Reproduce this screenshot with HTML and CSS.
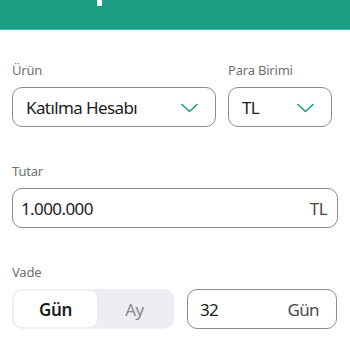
FILE: index.html
```html
<!DOCTYPE html>
<html lang="tr">

<head>
    <meta charset="UTF-8">
    <meta name="viewport" content="width=device-width, initial-scale=1.0">
    <title>Hesaplama</title>
    <link rel="stylesheet" href="styles.css">
</head>

<body>
    <div class="topbar">
        <span class="topbar-mark"></span>
    </div>

    <div class="form">
        <div class="row row-product">
            <div class="field">
                <div class="label">Ürün</div>
                <div class="select">
                    <span>Katılma Hesabı</span>
                    <svg class="chevron" width="17" height="10" viewBox="0 0 17 10">
                        <path d="M1 1.5 L8.5 8.5 L16 1.5" fill="none" stroke="#1d9c83" stroke-width="1.6" stroke-linecap="round" stroke-linejoin="round" />
                    </svg>
                </div>
            </div>
            <div class="field">
                <div class="label">Para Birimi</div>
                <div class="select">
                    <span>TL</span>
                    <svg class="chevron" width="17" height="10" viewBox="0 0 17 10">
                        <path d="M1 1.5 L8.5 8.5 L16 1.5" fill="none" stroke="#1d9c83" stroke-width="1.6" stroke-linecap="round" stroke-linejoin="round" />
                    </svg>
                </div>
            </div>
        </div>

        <div class="field group">
            <div class="label">Tutar</div>
            <div class="input amount">
                <span>1.000.000</span>
                <span class="unit">TL</span>
            </div>
        </div>

        <div class="field group">
            <div class="label">Vade</div>
            <div class="row row-term">
                <div class="segment">
                    <div class="seg-item active">Gün</div>
                    <div class="seg-item">Ay</div>
                </div>
                <div class="input term">
                    <span>32</span>
                    <span class="unit">Gün</span>
                </div>
            </div>
        </div>
    </div>
</body>

</html>
```

FILE: styles.css
```css
* {
    margin: 0;
    padding: 0;
    box-sizing: border-box;
}

body {
    font-family: 'Noto Sans', 'Open Sans', sans-serif;
    background: white;
    color: #1c1c1c;
}

.topbar {
    height: 30px;
    background: #1a9e84;
    border-bottom: 1px solid #4db8a2;
    padding-left: 97px;
}

.topbar-mark {
    display: block;
    width: 5px;
    height: 6px;
    background: white;
}

.form {
    padding: 31px 12px 0 12px;
}

.label {
    font-size: 13px;
    line-height: 18px;
    color: #6f6f6f;
    margin-bottom: 8px;
    letter-spacing: -0.2px;
}

.row {
    display: grid;
}

.row-product {
    grid-template-columns: 204px 104px;
    gap: 12px;
}

.row-term {
    grid-template-columns: 162px 150px;
    gap: 13px;
}

.group {
    margin-top: 35px;
}

.select,
.input {
    height: 40px;
    border: 1px solid #8c8c8c;
    border-radius: 10px;
    display: flex;
    align-items: center;
    justify-content: space-between;
    font-size: 17px;
    letter-spacing: -0.6px;
}

.select {
    padding: 0 17px 0 13px;
}

.amount {
    width: 326px;
    padding: 0 10px 0 8px;
}

.term {
    padding: 0 17px 0 12px;
}

.unit {
    color: #4a4a4a;
}

.chevron {
    margin-top: 2px;
}

.segment {
    height: 40px;
    background: #eeeef2;
    border-radius: 10px;
    padding: 2px;
    display: flex;
}

.seg-item {
    flex: 1;
    display: flex;
    align-items: center;
    justify-content: center;
    font-size: 17px;
    color: #8a8a8a;
    border-radius: 8px;
    letter-spacing: -0.4px;
}

.seg-item.active {
    flex: 0 0 83px;
    background: white;
    color: #1c1c1c;
    font-weight: 600;
}
```
